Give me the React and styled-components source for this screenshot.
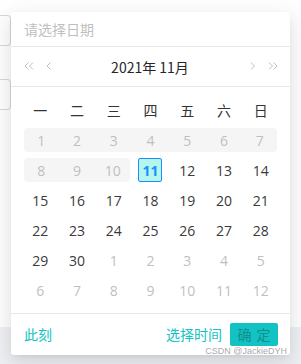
import React from 'react';
import styled, { createGlobalStyle } from 'styled-components';

const GlobalStyle = createGlobalStyle`
    html, body {
        margin: 0;
        padding: 0;
        background: #fff;
        font-family: "Noto Sans CJK SC", "Open Sans", sans-serif;
    }
`;

const Page = styled.div`
    position: relative;
    width: 301px;
    height: 364px;
    overflow: hidden;
    display: flex;
    flex-direction: column;
`;

const Form = styled.div`
    height: 327px;
    display: flex;
    flex-direction: column;
    gap: 33px;
    padding-top: 15px;
    box-sizing: border-box;
    background: #fff;
`;

const Field = styled.div`
    width: 11px;
    height: 31px;
    box-sizing: border-box;
    border: 1px solid #d9d9d9;
    border-left: none;
    border-radius: 0 4px 4px 0;
`;

const Ground = styled.div`
    flex: 1;
    background: #f0f1f5;
`;

const Popup = styled.div`
    position: absolute;
    left: 11px;
    top: 12px;
    width: 279px;
    background: #fff;
    border-radius: 3px;
    box-shadow: 0 3px 6px -4px rgba(0, 0, 0, 0.12), 0 6px 16px 0 rgba(0, 0, 0, 0.08),
        0 9px 28px 8px rgba(0, 0, 0, 0.05);
    display: flex;
    flex-direction: column;
`;

const InputRow = styled.div`
    height: 34px;
    display: flex;
    align-items: center;
    padding: 0 13px;
    border-bottom: 1px solid #e8e8e8;
    color: #bfbfbf;
    font-size: 14px;
`;

const Header = styled.div`
    height: 39px;
    display: flex;
    align-items: center;
    padding: 0 12px 0 13px;
    border-bottom: 1px solid #e8e8e8;
`;

const NavGroup = styled.div`
    display: flex;
    align-items: center;
    gap: ${p => p.gap}px;
`;

const Title = styled.div`
    flex: 1;
    text-align: center;
    font-size: 14px;
    font-weight: 400;
    color: #262626;
    padding-right: 2px;
`;

const Body = styled.div`
    padding: 8px 11px;
`;

const Grid = styled.div`
    display: grid;
    grid-template-columns: repeat(7, 1fr);
    grid-auto-rows: 30px;
`;

const WeekDay = styled.div`
    display: flex;
    align-items: center;
    justify-content: center;
    font-size: 14px;
    color: #333;
`;

const Cell = styled.div`
    display: flex;
    align-items: center;
`;

const CellBar = styled.div`
    flex: 1;
    height: 24px;
    display: flex;
    align-items: center;
    justify-content: center;
    background: ${p => (p.range ? '#f5f5f5' : 'transparent')};
    margin-left: ${p => (p.start ? 2 : 0)}px;
    margin-right: ${p => (p.end ? 2 : 0)}px;
    border-radius: ${p => `${p.start ? 4 : 0}px ${p.end ? 4 : 0}px ${p.end ? 4 : 0}px ${p.start ? 4 : 0}px`};
`;

const DateText = styled.span`
    font-family: "Open Sans", "Noto Sans CJK SC", sans-serif;
    font-size: 14px;
    color: ${p => (p.muted ? '#bfbfbf' : '#3a3a3a')};
`;

const Today = styled.span`
    width: 24px;
    height: 24px;
    box-sizing: border-box;
    display: flex;
    align-items: center;
    justify-content: center;
    border: 1px solid #1890ff;
    border-radius: 2px;
    background: #b5f5ec;
    color: #1890ff;
    font-family: "Open Sans", sans-serif;
    font-weight: 700;
    font-size: 14px;
`;

const Footer = styled.div`
    height: 40px;
    border-top: 1px solid #e8e8e8;
    display: flex;
    align-items: center;
    padding: 0 12px 1px 13px;
    font-size: 14px;
`;

const Link = styled.span`
    color: #13c2c2;
    margin-right: ${p => p.gap || 0}px;
`;

const Spacer = styled.div`
    flex: 1;
`;

const OkButton = styled.button`
    width: 48px;
    height: 23px;
    border: none;
    border-radius: 2px;
    background: #13c2c2;
    color: #0f8f8f;
    font-family: "Noto Sans CJK SC", sans-serif;
    font-size: 14px;
    padding: 0;
    letter-spacing: 1px;
    text-indent: 1px;
`;

const Watermark = styled.div`
    position: absolute;
    right: 14px;
    bottom: 8px;
    font-family: "Liberation Sans", sans-serif;
    font-size: 9px;
    color: rgba(150, 150, 150, 0.85);
`;

const Chevron = ({ dir = 'left', double }) => {
    const d = dir === 'left' ? 'M4.5 0.5 L1 4 L4.5 7.5' : 'M1 0.5 L4.5 4 L1 7.5';
    return (
        <svg width={double ? 10 : 6} height="9" viewBox={`0 0 ${double ? 10 : 6} 9`} fill="none"
            stroke="#bfbfbf" strokeWidth="1">
            <path d={d} />
            {double && <path d={d} transform="translate(4.5 0)" />}
        </svg>
    );
};

const weekDays = ['一', '二', '三', '四', '五', '六', '日'];

// each cell: day number, muted text, grey range bar position
const dates = [
    ...[1, 2, 3, 4, 5, 6, 7].map((d, i) => ({ d, muted: true, range: true, start: i === 0, end: i === 6 })),
    ...[8, 9, 10].map((d, i) => ({ d, muted: true, range: true, start: i === 0, end: i === 2 })),
    { d: 11, today: true },
    ...[12, 13, 14, 15, 16, 17, 18, 19, 20, 21, 22, 23, 24, 25, 26, 27, 28, 29, 30].map(d => ({ d })),
    ...[1, 2, 3, 4, 5, 6, 7, 8, 9, 10, 11, 12].map(d => ({ d, muted: true })),
];

export default function App() {
    return (<>
        <GlobalStyle />
        <Page>
            <Form>
                <Field />
                <Field />
            </Form>
            <Ground />
            <Popup>
                <InputRow>请选择日期</InputRow>
                <Header>
                    <NavGroup gap={12}>
                        <Chevron dir="left" double />
                        <Chevron dir="left" />
                    </NavGroup>
                    <Title>2021年 11月</Title>
                    <NavGroup gap={12}>
                        <Chevron dir="right" />
                        <Chevron dir="right" double />
                    </NavGroup>
                </Header>
                <Body>
                    <Grid>
                        {weekDays.map(w => <WeekDay key={w}>{w}</WeekDay>)}
                        {dates.map((x, i) => (
                            <Cell key={i}>
                                <CellBar range={x.range} start={x.start} end={x.end}>
                                    {x.today
                                        ? <Today>{x.d}</Today>
                                        : <DateText muted={x.muted}>{x.d}</DateText>}
                                </CellBar>
                            </Cell>
                        ))}
                    </Grid>
                </Body>
                <Footer>
                    <Link>此刻</Link>
                    <Spacer />
                    <Link gap={8}>选择时间</Link>
                    <OkButton>确 定</OkButton>
                </Footer>
            </Popup>
            <Watermark>CSDN @JackieDYH</Watermark>
        </Page>
    </>);
}
